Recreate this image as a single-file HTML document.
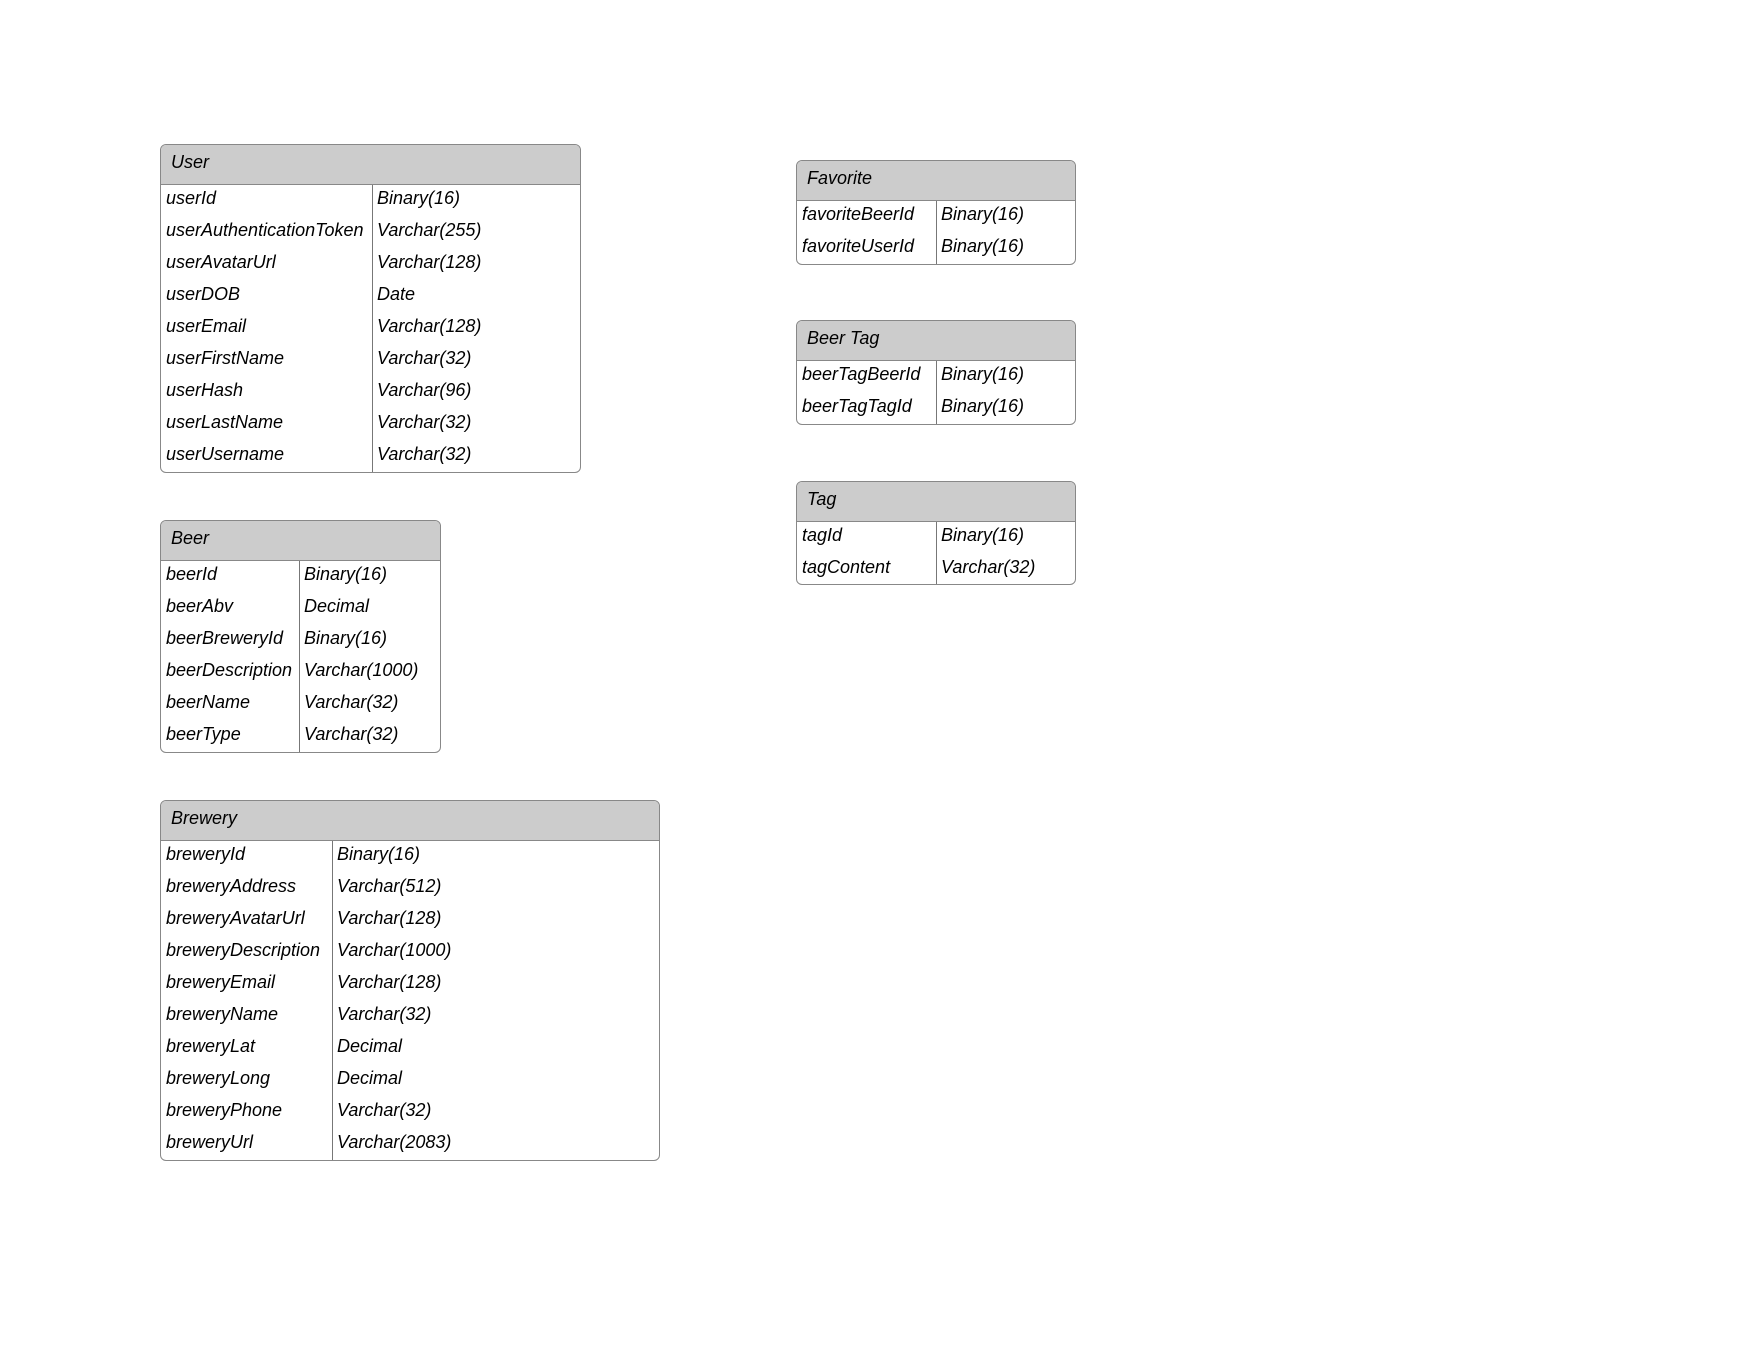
<!DOCTYPE html>
<html><head><meta charset="utf-8"><style>
body{margin:0;width:1760px;height:1360px;background:#fff;font-family:"Liberation Sans",Arial,sans-serif;font-style:italic;font-size:18px;color:#000;position:relative;overflow:hidden}
.t{position:absolute;border:1px solid #888;border-radius:6px;box-sizing:border-box;overflow:hidden;background:#fff}
.h{height:40px;background:#ccc;border-bottom:1px solid #888;box-sizing:border-box;line-height:35px;padding-left:10px}
.r{height:32px;line-height:32px;position:relative;white-space:nowrap}
.r span{position:absolute;top:-3px}
.d{position:absolute;top:40px;bottom:0;width:1px;background:#777}
</style></head><body>
<div class="t" style="left:160px;top:144px;width:421px;height:329px">
<div class="h">User</div><div class="d" style="left:211px"></div>
<div class="r"><span style="left:5px">userId</span><span style="left:216px">Binary(16)</span></div>
<div class="r"><span style="left:5px">userAuthenticationToken</span><span style="left:216px">Varchar(255)</span></div>
<div class="r"><span style="left:5px">userAvatarUrl</span><span style="left:216px">Varchar(128)</span></div>
<div class="r"><span style="left:5px">userDOB</span><span style="left:216px">Date</span></div>
<div class="r"><span style="left:5px">userEmail</span><span style="left:216px">Varchar(128)</span></div>
<div class="r"><span style="left:5px">userFirstName</span><span style="left:216px">Varchar(32)</span></div>
<div class="r"><span style="left:5px">userHash</span><span style="left:216px">Varchar(96)</span></div>
<div class="r"><span style="left:5px">userLastName</span><span style="left:216px">Varchar(32)</span></div>
<div class="r"><span style="left:5px">userUsername</span><span style="left:216px">Varchar(32)</span></div>
</div>
<div class="t" style="left:160px;top:520px;width:281px;height:233px">
<div class="h">Beer</div><div class="d" style="left:138px"></div>
<div class="r"><span style="left:5px">beerId</span><span style="left:143px">Binary(16)</span></div>
<div class="r"><span style="left:5px">beerAbv</span><span style="left:143px">Decimal</span></div>
<div class="r"><span style="left:5px">beerBreweryId</span><span style="left:143px">Binary(16)</span></div>
<div class="r"><span style="left:5px">beerDescription</span><span style="left:143px">Varchar(1000)</span></div>
<div class="r"><span style="left:5px">beerName</span><span style="left:143px">Varchar(32)</span></div>
<div class="r"><span style="left:5px">beerType</span><span style="left:143px">Varchar(32)</span></div>
</div>
<div class="t" style="left:160px;top:800px;width:500px;height:361px">
<div class="h">Brewery</div><div class="d" style="left:171px"></div>
<div class="r"><span style="left:5px">breweryId</span><span style="left:176px">Binary(16)</span></div>
<div class="r"><span style="left:5px">breweryAddress</span><span style="left:176px">Varchar(512)</span></div>
<div class="r"><span style="left:5px">breweryAvatarUrl</span><span style="left:176px">Varchar(128)</span></div>
<div class="r"><span style="left:5px">breweryDescription</span><span style="left:176px">Varchar(1000)</span></div>
<div class="r"><span style="left:5px">breweryEmail</span><span style="left:176px">Varchar(128)</span></div>
<div class="r"><span style="left:5px">breweryName</span><span style="left:176px">Varchar(32)</span></div>
<div class="r"><span style="left:5px">breweryLat</span><span style="left:176px">Decimal</span></div>
<div class="r"><span style="left:5px">breweryLong</span><span style="left:176px">Decimal</span></div>
<div class="r"><span style="left:5px">breweryPhone</span><span style="left:176px">Varchar(32)</span></div>
<div class="r"><span style="left:5px">breweryUrl</span><span style="left:176px">Varchar(2083)</span></div>
</div>
<div class="t" style="left:796px;top:160px;width:280px;height:105px">
<div class="h">Favorite</div><div class="d" style="left:139px"></div>
<div class="r"><span style="left:5px">favoriteBeerId</span><span style="left:144px">Binary(16)</span></div>
<div class="r"><span style="left:5px">favoriteUserId</span><span style="left:144px">Binary(16)</span></div>
</div>
<div class="t" style="left:796px;top:320px;width:280px;height:105px">
<div class="h">Beer Tag</div><div class="d" style="left:139px"></div>
<div class="r"><span style="left:5px">beerTagBeerId</span><span style="left:144px">Binary(16)</span></div>
<div class="r"><span style="left:5px">beerTagTagId</span><span style="left:144px">Binary(16)</span></div>
</div>
<div class="t" style="left:796px;top:481px;width:280px;height:104px">
<div class="h">Tag</div><div class="d" style="left:139px"></div>
<div class="r"><span style="left:5px">tagId</span><span style="left:144px">Binary(16)</span></div>
<div class="r"><span style="left:5px">tagContent</span><span style="left:144px">Varchar(32)</span></div>
</div>
</body></html>
